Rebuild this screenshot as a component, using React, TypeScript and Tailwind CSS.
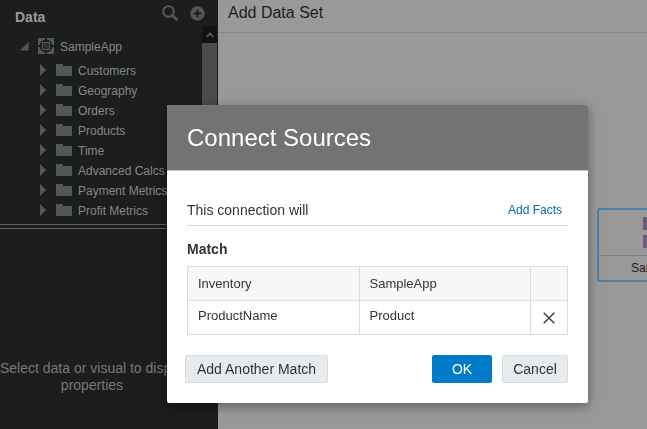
import React from "react";

const folders = [
  "Customers",
  "Geography",
  "Orders",
  "Products",
  "Time",
  "Advanced Calcs",
  "Payment Metrics",
  "Profit Metrics",
];

function SearchIcon() {
  return (
    <svg width="17" height="17" viewBox="0 0 17 17" fill="none" stroke="#54575a">
      <circle cx="6.5" cy="6.5" r="5.3" strokeWidth="2" />
      <path d="M10.3 10.3 L15.5 15.3" strokeWidth="2.6" />
    </svg>
  );
}

function PlusIcon() {
  return (
    <svg width="15" height="15" viewBox="0 0 15 15">
      <circle cx="7.5" cy="7.5" r="7.2" fill="#54575a" />
      <path d="M7.5 3.5v8M3.5 7.5h8" stroke="#1c1e1d" strokeWidth="2" />
    </svg>
  );
}

function SubjectAreaIcon() {
  return (
    <svg width="16" height="16" viewBox="0 0 16 16" fill="#54575a">
      <path d="M0 0h7v2H5v1H3v2H2v2H0zM16 0v7h-2V5h-1V3h-2V2H9V0zM0 16V9h2v2h1v2h2v1h2v2zM16 16H9v-2h2v-1h2v-2h1V9h2z" />
      <path d="M4 4h8v8H4zM5.2 5.2v5.6h5.6V5.2z" fillRule="evenodd" />
      <rect x="6" y="6" width="4" height="4" fill="#2c2f30" />
      <path d="M0 0h3v3H0zM13 0h3v3h-3zM0 13h3v3H0zM13 13h3v3h-3z" />
    </svg>
  );
}

function FolderIcon() {
  return (
    <svg width="16" height="12" viewBox="0 0 16 12" fill="#54575a">
      <path d="M0 0h7v2h9v10H0z" />
    </svg>
  );
}

function Sidebar() {
  return (
    <aside className="flex w-[218px] shrink-0 flex-col bg-[#1c1e1d]">
      <div className="flex h-[26px] shrink-0 items-start pr-[13px] pl-[15px]">
        <h2 className="flex-1 pt-2 text-[14px] leading-[18px] font-bold text-[#999999]">Data</h2>
        <div className="flex gap-[11px] pt-[5px]">
          <button type="button" aria-label="Search">
            <SearchIcon />
          </button>
          <button type="button" aria-label="Add">
            <PlusIcon />
          </button>
        </div>
      </div>
      <div className="flex h-[198px] shrink-0">
        <div className="min-w-0 flex-1 pt-[10px] text-[12px] text-[#858786]">
          <div className="flex h-5 items-center pl-5">
            <svg width="9" height="9" viewBox="0 0 9 9" fill="#54575a">
              <path d="M8.5 0v8.5H0z" />
            </svg>
            <span className="pr-[6px] pl-[9px]">
              <SubjectAreaIcon />
            </span>
            <span className="pt-px">SampleApp</span>
          </div>
          <ul className="pt-1">
            {folders.map((name) => (
              <li key={name} className="flex h-5 items-center whitespace-nowrap pl-10">
                <svg width="6" height="12" viewBox="0 0 6 12" fill="#54575a">
                  <path d="M0 0l6 6-6 6z" />
                </svg>
                <span className="pr-[6px] pl-[10px]">
                  <FolderIcon />
                </span>
                <span className="pt-px">{name}</span>
              </li>
            ))}
          </ul>
        </div>
        <div className="mr-px flex w-[15px] flex-col bg-[#4a4b4d]">
          <div className="flex h-[17px] items-center justify-center bg-[#101213]">
            <svg width="8" height="6" viewBox="0 0 8 6" fill="none" stroke="#54575a" strokeWidth="1.8">
              <path d="M0.7 5.2L4 1.4l3.3 3.8" />
            </svg>
          </div>
        </div>
      </div>
      <div className="h-[5px] shrink-0 border-y border-[#5c5e5f]" />
      <div className="w-[184px] pt-[131px] text-center text-[14px] leading-[17px] whitespace-nowrap text-[#767877]">
        Select data or visual to display
        <br />
        properties
      </div>
    </aside>
  );
}

function Canvas() {
  return (
    <main className="relative min-w-0 flex-1 overflow-hidden bg-[#999999]">
      <h1 className="h-[33px] border-b border-[#7f8b92] pt-[3px] pl-[10px] text-[16px] leading-[20px] text-[#1d1d1d]">
        Add Data Set
      </h1>
      <div className="absolute top-[208px] left-[379px] w-[130px] rounded-[3px] border-2 border-[#4c7da3]">
        <div className="flex h-[45px] items-center justify-center">
          <svg width="38" height="31" viewBox="0 0 38 31" fill="#6c5a80">
            <path d="M0 0h16v13H0zM22 0h16v13H22zM0 18h16v13H0zM22 18h16v13H22z" />
          </svg>
        </div>
        <div className="h-[25px] border-t border-[#80848a] text-center text-[12px] leading-[25px] text-[#1d1d1d]">
          SampleApp
        </div>
      </div>
    </main>
  );
}

function ConnectSourcesDialog() {
  return (
    <div
      role="dialog"
      aria-labelledby="dialog-title"
      className="fixed top-[105px] left-[167px] w-[421px] overflow-hidden rounded-[2px] bg-white text-[#333333] shadow-[0_3px_12px_rgba(0,0,0,0.4)]"
    >
      <div className="flex h-[66px] items-center border-b border-[#c8c8c8] bg-[#737373] px-5">
        <h2 id="dialog-title" className="text-[24px] text-white">
          Connect Sources
        </h2>
      </div>
      <div className="px-5 pt-[24px]">
        <div className="flex h-[31px] items-center justify-between border-b border-[#d6d7d8] pr-[6px]">
          <span className="text-[14px]">This connection will</span>
          <a href="#facts" className="text-[12px] text-[#0067b0]">
            Add Facts
          </a>
        </div>
        <h3 className="pt-[13px] pb-[7px] text-[14px] leading-[20px] font-bold">Match</h3>
        <table className="w-full table-fixed border-collapse text-left text-[13px] leading-[17px]">
          <colgroup>
            <col />
            <col />
            <col className="w-[37px]" />
          </colgroup>
          <thead>
            <tr className="h-[34px] bg-[#f7f7f7]">
              <th className="border border-[#d6dfe6] px-[10px] font-normal">Inventory</th>
              <th className="border border-[#d6dfe6] px-[10px] font-normal">SampleApp</th>
              <th className="border border-[#d6dfe6]" />
            </tr>
          </thead>
          <tbody>
            <tr className="h-[34px]">
              <td className="border border-[#d6dfe6] px-[10px] pt-[6px] align-top">ProductName</td>
              <td className="border border-[#d6dfe6] px-[10px] pt-[6px] align-top">Product</td>
              <td className="border border-[#d6dfe6]">
                <button type="button" aria-label="Remove match" className="mx-auto block">
                  <svg width="12" height="12" viewBox="0 0 12 12" stroke="#333333" strokeWidth="1.3">
                    <path d="M0.7 0.7l10.6 10.6M11.3 0.7L0.7 11.3" />
                  </svg>
                </button>
              </td>
            </tr>
          </tbody>
        </table>
      </div>
      <div className="flex items-center gap-[10px] pt-5 pr-5 pb-5 pl-[18px] text-[14px]">
        <button type="button" className="mr-auto h-7 rounded-[2px] border border-[#d3dde4] bg-[#e7ebee] px-[11px]">
          Add Another Match
        </button>
        <button type="button" className="h-7 w-[60px] rounded-[2px] bg-[#007bc8] text-white">
          OK
        </button>
        <button type="button" className="h-7 w-[66px] rounded-[2px] border border-[#d3dde4] bg-[#e7ebee]">
          Cancel
        </button>
      </div>
    </div>
  );
}

export default function App() {
  return (
    <div className="flex h-screen overflow-hidden font-['Liberation_Sans',Arial,sans-serif]">
      <Sidebar />
      <Canvas />
      <ConnectSourcesDialog />
    </div>
  );
}
